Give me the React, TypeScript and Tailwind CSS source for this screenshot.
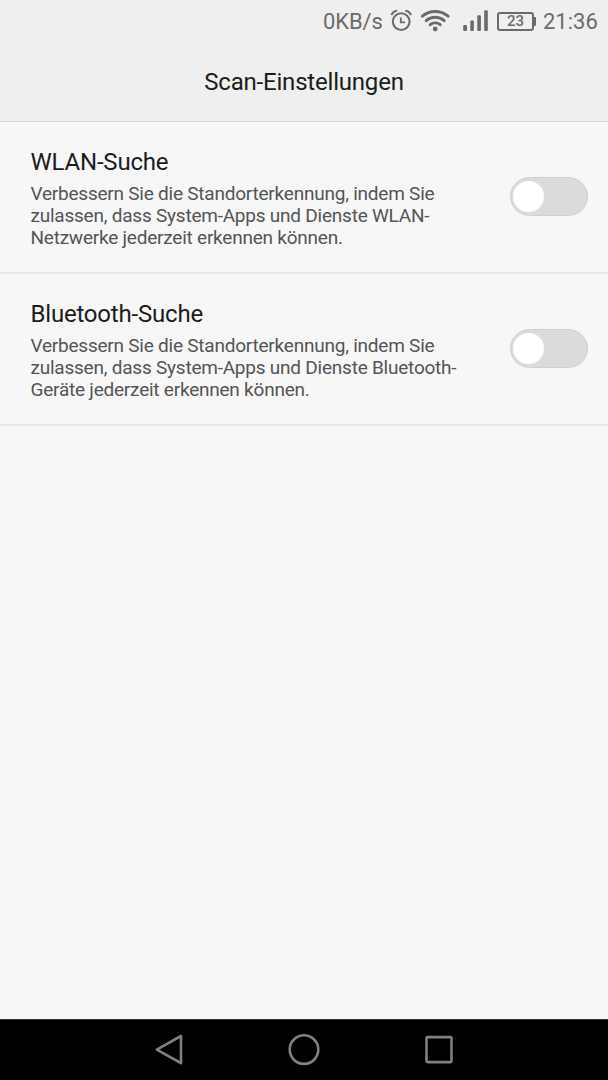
import { useState } from 'react';

type ScanOption = {
  id: string;
  title: string;
  lines: string[];
};

const scanOptions: ScanOption[] = [
  {
    id: 'wlan',
    title: 'WLAN-Suche',
    lines: [
      'Verbessern Sie die Standorterkennung, indem Sie',
      'zulassen, dass System-Apps und Dienste WLAN-',
      'Netzwerke jederzeit erkennen können.',
    ],
  },
  {
    id: 'bluetooth',
    title: 'Bluetooth-Suche',
    lines: [
      'Verbessern Sie die Standorterkennung, indem Sie',
      'zulassen, dass System-Apps und Dienste Bluetooth-',
      'Geräte jederzeit erkennen können.',
    ],
  },
];

const AlarmIcon = () => (
  <svg width="22" height="24" viewBox="0 0 22 24" fill="none" stroke="currentColor" className="shrink-0">
    <circle cx="11.2" cy="12.6" r="8.4" strokeWidth="2.1" />
    <path d="M10.8 8.4v5h4.2" strokeWidth="1.8" />
    <path d="M1.8 5.2Q3.2 2.6 6.2 1.8M20.6 5.2Q19.2 2.6 16.2 1.8" strokeWidth="2.2" strokeLinecap="round" />
  </svg>
);

const WifiIcon = () => (
  <svg width="30" height="24" viewBox="0 0 30 24" fill="none" stroke="currentColor" className="shrink-0">
    <path d="M2.4 7.2Q8 2.5 15.2 2.5T28 7.2" strokeWidth="2.9" strokeLinecap="round" />
    <path d="M6.2 11.7Q10 8.3 15.2 8.3T24.2 11.7" strokeWidth="2.9" strokeLinecap="round" />
    <path d="M10.2 15.7Q12.2 13.9 15.2 13.9T20.2 15.7" strokeWidth="2.9" strokeLinecap="round" />
    <circle cx="15.2" cy="20" r="2.4" fill="currentColor" stroke="none" />
  </svg>
);

const SignalIcon = () => (
  <svg width="26" height="24" viewBox="0 0 26 24" fill="currentColor" className="shrink-0">
    <rect x="0.2" y="16" width="3.8" height="6" rx="1" />
    <rect x="7.3" y="11.5" width="3.6" height="10.5" rx="1" />
    <rect x="14.3" y="6.3" width="3.6" height="15.7" rx="1" />
    <rect x="21.2" y="1.2" width="3.6" height="20.8" rx="1" />
  </svg>
);

const StatusBar = () => (
  <div className="flex h-[42px] items-center pl-[323px] text-[22px] leading-[42px] text-[#6b6b6b]">
    <span className="w-[67px] shrink-0 pt-px tracking-[-0.1px]">0KB/s</span>
    <AlarmIcon />
    <span className="ml-2 flex">
      <WifiIcon />
    </span>
    <span className="ml-[13px] flex">
      <SignalIcon />
    </span>
    <span className="ml-2 flex shrink-0 items-center">
      <span className="flex h-[19px] w-[37px] items-center justify-center rounded-[3px] border-2 border-current text-[15px] leading-none font-medium">
        23
      </span>
      <span className="h-[9px] w-[2px] rounded-r-[1px] bg-current" />
    </span>
    <span className="ml-[7px] shrink-0 pt-px">21:36</span>
  </div>
);

type ToggleProps = {
  label: string;
  checked: boolean;
  onChange: () => void;
};

const Toggle = ({ label, checked, onChange }: ToggleProps) => (
  <button
    type="button"
    role="switch"
    aria-checked={checked}
    aria-label={label}
    onClick={onChange}
    className={`mb-px flex h-[39px] w-[78px] shrink-0 items-center rounded-full border border-[#d0d0d0] px-[2px] ${
      checked ? 'justify-end bg-[#2fa9c4]' : 'justify-start bg-[#dbdbdb]'
    }`}
  >
    <span className="size-[31px] rounded-full bg-white" />
  </button>
);

const NavigationBar = () => (
  <nav className="flex h-[61px] items-center justify-center gap-[103px] border-t border-[#333] bg-black text-[#808080]">
    <button type="button" aria-label="Zurück">
      <svg width="32" height="32" viewBox="0 0 32 32" fill="none" stroke="currentColor" strokeWidth="2.6" strokeLinejoin="round">
        <path d="M3.8 15.6 28 2v27.2z" />
      </svg>
    </button>
    <button type="button" aria-label="Startbildschirm">
      <svg width="32" height="32" viewBox="0 0 32 32" fill="none" stroke="currentColor" strokeWidth="2.6">
        <circle cx="16" cy="15.6" r="14.3" />
      </svg>
    </button>
    <button type="button" aria-label="Letzte Apps">
      <svg width="32" height="32" viewBox="0 0 32 32" fill="none" stroke="currentColor" strokeWidth="2.6">
        <rect x="3.5" y="3.1" width="25" height="25" rx="1" />
      </svg>
    </button>
  </nav>
);

export default function App() {
  const [enabled, setEnabled] = useState<Record<string, boolean>>({});

  const toggle = (id: string) => {
    setEnabled((current) => ({ ...current, [id]: !current[id] }));
  };

  return (
    <div className="flex h-[1080px] w-[608px] flex-col overflow-hidden bg-[#f7f7f7] font-[Roboto,sans-serif]">
      <header className="h-[122px] border-b border-[#d6d6d6] bg-[#efefef]">
        <StatusBar />
        <h1 className="text-center text-[24px] leading-[80px] tracking-[-0.2px] text-[#1c1c1c]">
          Scan-Einstellungen
        </h1>
      </header>

      <main className="flex-1">
        {scanOptions.map((option) => (
          <section
            key={option.id}
            className="flex h-[152px] items-center justify-between border-b-2 border-[#e6e6e6] pr-5 pl-[30.5px]"
          >
            <div className="whitespace-nowrap">
              <h2 className="text-[24px] leading-[32px] tracking-[-0.2px] text-[#1c1c1c]">{option.title}</h2>
              <p className="mt-[5px] text-[19px] leading-[22px] tracking-[-0.225px] text-[#555]">
                {option.lines.map((line) => (
                  <span key={line} className="block">{line}</span>
                ))}
              </p>
            </div>
            <Toggle
              label={option.title}
              checked={Boolean(enabled[option.id])}
              onChange={() => toggle(option.id)}
            />
          </section>
        ))}
      </main>

      <NavigationBar />
    </div>
  );
}
